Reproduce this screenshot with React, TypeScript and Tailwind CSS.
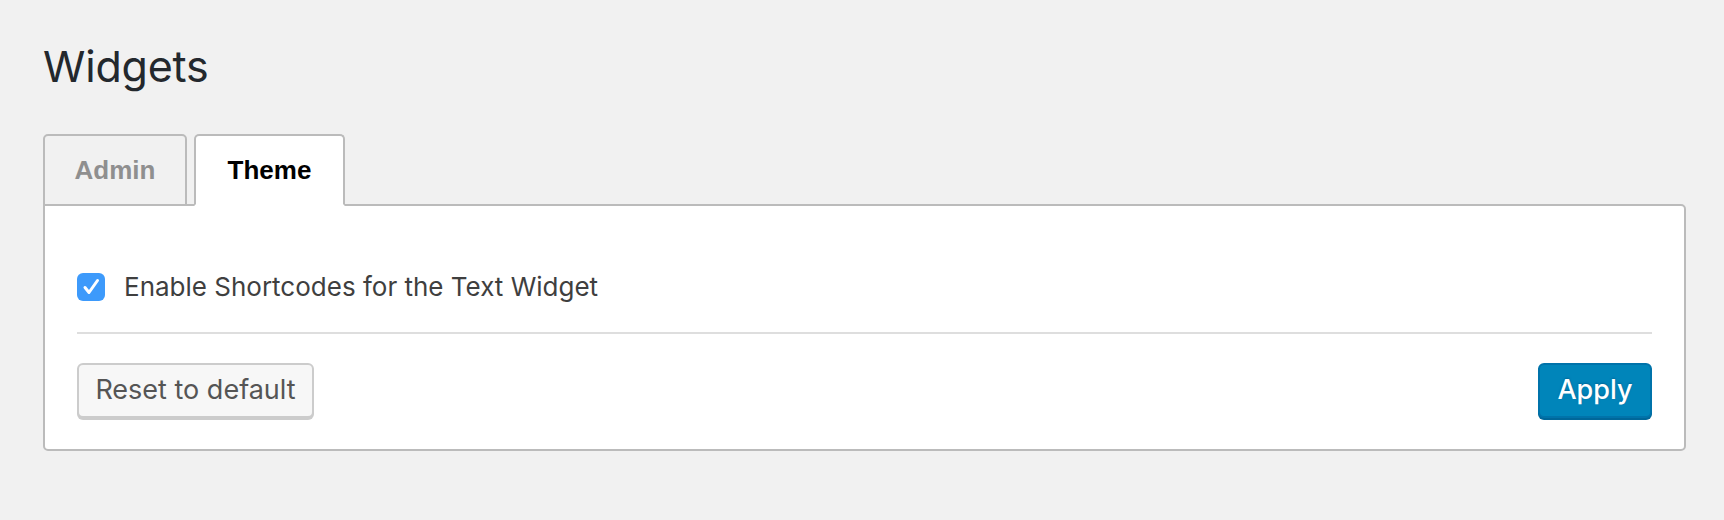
import { useState } from 'react';

const sans = "font-['Inter','Liberation_Sans',sans-serif]";

const App = () => {
  const [tab, setTab] = useState<'admin' | 'theme'>('theme');
  const [enabled, setEnabled] = useState(true);

  return (
    <div className={`min-h-screen bg-[#f1f1f1] pl-[43px] pr-[38px] pt-[38px] ${sans}`}>
      <h1 className="text-[43px] leading-[56px] font-normal tracking-[-0.2px] text-[#23282d]">Widgets</h1>

      <div className="mt-[40px] flex gap-[7px] font-['Liberation_Sans',Arial,sans-serif]">
        <button
          onClick={() => setTab('admin')}
          className={`relative z-10 -mb-[2px] flex h-[72px] w-[144px] items-center justify-center rounded-t-[5px] border-2 text-[26px] font-bold ${
            tab === 'admin' ? 'border-[#bbb] border-b-white bg-white text-black' : 'border-[#bbb] bg-[#f1f1f1] text-[#8f8f8f]'
          }`}
        >
          Admin
        </button>
        <button
          onClick={() => setTab('theme')}
          className={`relative z-10 -mb-[2px] flex h-[72px] w-[151px] items-center justify-center rounded-t-[5px] border-2 text-[26px] font-bold ${
            tab === 'theme' ? 'border-[#bbb] border-b-white bg-white text-black' : 'border-[#bbb] bg-[#f1f1f1] text-[#8f8f8f]'
          }`}
        >
          Theme
        </button>
      </div>

      <section className="rounded-b-[5px] rounded-tr-[5px] border-2 border-[#bbb] bg-white px-[32px] pt-[67px] pb-[31px]">
        <label className="flex cursor-pointer items-center gap-[19px]">
          <span
            onClick={() => setEnabled(!enabled)}
            className={`flex h-[28px] w-[28px] shrink-0 items-center justify-center rounded-[6px] ${enabled ? 'bg-[#3d9afb]' : 'border-2 border-[#bbb] bg-white'}`}
          >
            {enabled && (
              <svg width="28" height="28" viewBox="0 0 28 28" fill="none" className="shrink-0">
                <path d="M8 14.5 L12 19.5 L20.5 7.5" stroke="white" strokeWidth="3" strokeLinecap="round" strokeLinejoin="round" />
              </svg>
            )}
          </span>
          <span className="text-[26px] leading-[28px] text-[#3f3f3f]">Enable Shortcodes for the Text Widget</span>
        </label>

        <div className="mt-[31px] h-[2px] bg-[#dedede]" />

        <div className="mt-[29px] flex items-start justify-between">
          <button className="h-[55px] w-[237px] rounded-[6px] border-2 border-[#ccc] bg-[#f7f7f7] text-[27px] text-[#555] shadow-[0_2px_0_#ccc]">
            Reset to default
          </button>
          <button className="h-[55px] w-[114px] rounded-[6px] border-2 border-[#0073aa] bg-[#0085ba] text-[27px] font-medium text-white shadow-[0_2px_0_#006799] [text-shadow:0_-1px_2px_#006799]">
            Apply
          </button>
        </div>
      </section>
    </div>
  );
};

export default App;
